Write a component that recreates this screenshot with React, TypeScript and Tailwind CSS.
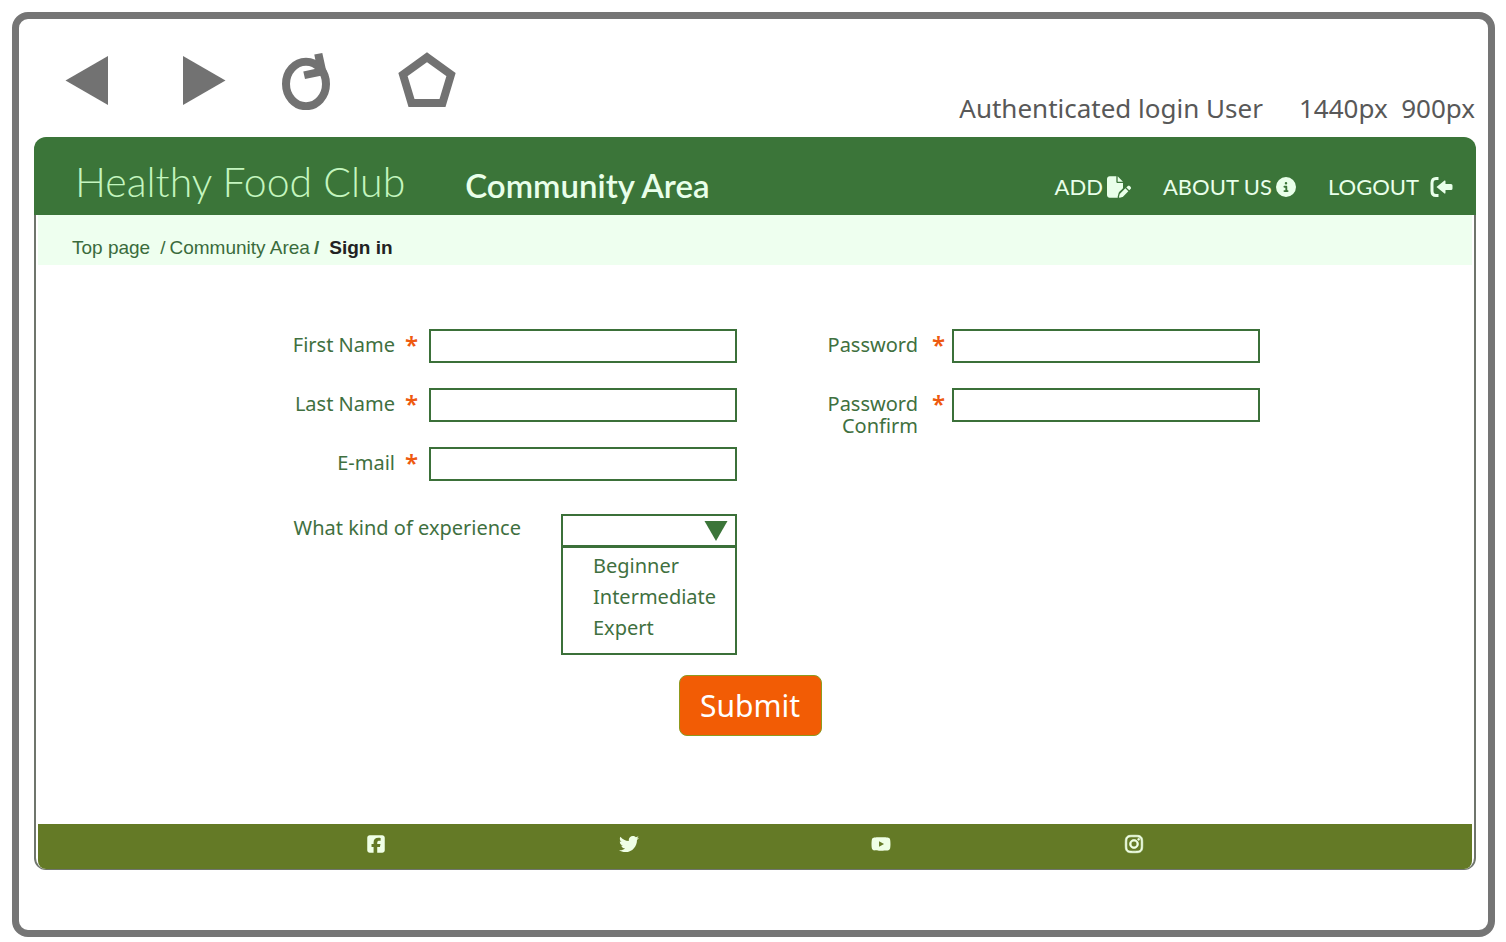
import { useState, type ReactNode } from "react";
import { FaCircleInfo, FaFilePen, FaInstagram, FaSquareFacebook, FaTwitter, FaYoutube } from "react-icons/fa6";

type ToolbarButtonProps = { label: string; className?: string; children: ReactNode };

function ToolbarButton({ label, className = "", children }: ToolbarButtonProps) {
  return (
    <button type="button" aria-label={label} className={`h-[58px] w-[60px] text-[#727272] ${className}`}>
      {children}
    </button>
  );
}

function Toolbar() {
  return (
    <div className="flex min-h-[118px] flex-wrap items-start justify-between pr-[13px] pl-[38px]">
      <div className="flex pt-[33px]">
        <ToolbarButton label="Back">
          <svg viewBox="0 0 60 58" fill="currentColor">
            <path d="M8.500 28.500 51 4v49z" />
          </svg>
        </ToolbarButton>
        <ToolbarButton label="Forward" className="ml-[57px]">
          <svg viewBox="0 0 60 58" fill="currentColor">
            <path d="M51.500 28.500 9 4v49z" />
          </svg>
        </ToolbarButton>
        <ToolbarButton label="Reload" className="ml-[42px]">
          <svg viewBox="0 0 60 58">
            <ellipse cx="30" cy="32" rx="20" ry="22.200" fill="none" stroke="currentColor" strokeWidth="8" />
            <path d="M38.300 2.400 46.300 1 51 22.500 29 27 27.300 19.500 41 16.500z" fill="currentColor" />
          </svg>
        </ToolbarButton>
        <ToolbarButton label="Home" className="ml-[61px]">
          <svg viewBox="0 0 60 58">
            <path d="M30 5.200 54 22.600 45.500 51h-31L6 22.600z" fill="none" stroke="currentColor" strokeWidth="8" />
          </svg>
        </ToolbarButton>
      </div>
      <p className="flex gap-9 pt-[73px] text-[26px] leading-8 whitespace-pre text-[#585858]">
        <span>Authenticated login User</span>
        <span>1440px  900px</span>
      </p>
    </div>
  );
}

function LogoutIcon() {
  return (
    <svg viewBox="0 0 24 22" className="h-[22px] w-6" fill="currentColor">
      <path d="M9.500 2.500H7Q3 2.500 3 7v8q0 4.500 4 4.500h2.500" fill="none" stroke="currentColor" strokeWidth="3" />
      <path d="M7.500 11 15.500 4.500Q16.500 4 16.500 5.500v2.500H22q1.500 0 1.500 1.500v3q0 1.500-1.500 1.500h-5.500v2.500q0 1.500-1 1z" />
    </svg>
  );
}

function Header() {
  return (
    <header className="flex min-h-[78px] flex-wrap items-end rounded-t-xl bg-[#3b7539] pr-[23px] pl-[41px] font-[Lato,sans-serif] text-[#e9ffea]">
      <a href="#home" className="pb-2 text-[41px] leading-[50px] font-light text-[#c4f5bf]">
        Healthy Food Club
      </a>
      <h1 className="pb-[10px] pl-[60px] text-[33px] leading-10 font-semibold">Community Area</h1>
      <nav className="ml-auto flex gap-8 pb-4 text-[22px] leading-6">
        <a href="#add" className="flex items-center gap-1">
          ADD <FaFilePen className="size-6" />
        </a>
        <a href="#about" className="flex items-center gap-1">
          ABOUT US <FaCircleInfo className="size-5" />
        </a>
        <a href="#logout" className="flex items-center gap-[10px]">
          LOGOUT <LogoutIcon />
        </a>
      </nav>
    </header>
  );
}

function Breadcrumb() {
  return (
    <nav
      aria-label="Breadcrumb"
      className="mx-[2px] flex h-[50px] items-center bg-[#eeffef] pt-4 pl-[34px] font-['Liberation_Sans',sans-serif] text-[19px] text-[#3a6b3c]"
    >
      <a href="#top">Top page</a>
      <span className="pr-1 pl-[10px]">/</span>
      <a href="#community">Community Area</a>
      <span className="pr-[10px] pl-1 font-bold">/</span>
      <span aria-current="page" className="font-bold text-[#222222]">
        Sign in
      </span>
    </nav>
  );
}

type FieldProps = { id: string; label: ReactNode; type?: string; spacing: string };

function Field({ id, label, type = "text", spacing }: FieldProps) {
  return (
    <div className="flex h-[34px] items-start justify-end">
      <label htmlFor={id} className="flex pt-[5px] text-right leading-[22px]">
        <span>{label}</span>
        <span className={`w-3 text-center text-[24px] font-semibold text-[#ee5a10] ${spacing}`}>*</span>
      </label>
      <input
        id={id}
        type={type}
        required
        className="h-[34px] w-[308px] min-w-0 border-2 border-[#3b7039] bg-white px-2 outline-none"
      />
    </div>
  );
}

const LEVELS = ["Beginner", "Intermediate", "Expert"];

function ExperienceField() {
  const [level, setLevel] = useState("");
  return (
    <div className="mt-2 flex items-start justify-end gap-10">
      <label htmlFor="experience" className="pt-[3px] leading-[22px]">
        What kind of experience
      </label>
      <div className="w-[176px] border-2 border-[#3b7039]">
        <div className="relative border-b-[3px] border-[#3b7039]">
          <select
            id="experience"
            value={level}
            onChange={(event) => setLevel(event.target.value)}
            className="block h-[29px] w-full appearance-none bg-white px-2 text-base outline-none"
          >
            <option value="" />
            {LEVELS.map((name) => (
              <option key={name}>{name}</option>
            ))}
          </select>
          <svg viewBox="0 0 24 20" className="pointer-events-none absolute top-[5px] right-[7px] h-5 w-6" fill="#3b7539">
            <path d="M.5 0h23L12 20z" />
          </svg>
        </div>
        <ul className="h-[105px] pt-[2px] pl-[30px]">
          {LEVELS.map((name) => (
            <li key={name}>
              <button type="button" onClick={() => setLevel(name)} className="block h-[31px] leading-[31px]">
                {name}
              </button>
            </li>
          ))}
        </ul>
      </div>
    </div>
  );
}

function SignInForm() {
  const left = "ml-[10px] mr-3";
  const right = "ml-[14px] mr-2";
  return (
    <form
      onSubmit={(event) => event.preventDefault()}
      className="mx-auto w-full max-w-[1010px] flex-1 pt-16 pb-6 text-[20px] text-[#3f7040]"
    >
      <div className="grid grid-cols-2 gap-9">
        <div className="flex flex-col gap-[25px]">
          <Field id="first-name" label="First Name" spacing={left} />
          <Field id="last-name" label="Last Name" spacing={left} />
          <Field id="email" label="E-mail" type="email" spacing={left} />
          <ExperienceField />
        </div>
        <div className="flex flex-col gap-[25px]">
          <Field id="password" label="Password" type="password" spacing={right} />
          <Field
            id="password-confirm"
            label={
              <>
                Password
                <br />
                Confirm
              </>
            }
            type="password"
            spacing={right}
          />
        </div>
      </div>
      <div className="mt-5 flex justify-center pr-[10px]">
        <button
          type="submit"
          className="h-[61px] w-[143px] rounded-lg border border-[#8f9a1e] bg-[#f25c05] text-[30px] text-white"
        >
          Submit
        </button>
      </div>
    </form>
  );
}

function Footer() {
  return (
    <footer className="mx-[2px] h-[45px] rounded-b-lg bg-[#647a26] pt-[10px] text-[#efffe6]">
      <div className="mx-auto grid w-full max-w-[1010px] grid-cols-4 justify-items-center">
        <a href="#facebook" aria-label="Facebook">
          <FaSquareFacebook className="size-5" />
        </a>
        <a href="#twitter" aria-label="Twitter">
          <FaTwitter className="size-5" />
        </a>
        <a href="#youtube" aria-label="YouTube">
          <FaYoutube className="size-5" />
        </a>
        <a href="#instagram" aria-label="Instagram">
          <FaInstagram className="size-5" stroke="currentColor" strokeWidth="18" />
        </a>
      </div>
    </footer>
  );
}

export default function App() {
  return (
    <div className="flex min-h-screen flex-col bg-white pt-3 pr-[11px] pb-[5px] pl-3 font-['Noto_Sans',sans-serif]">
      <div className="flex flex-1 flex-col rounded-2xl border-[7px] border-[#757575] pb-[60px]">
        <Toolbar />
        <div className="mr-3 ml-[15px] flex flex-1 flex-col">
          <Header />
          <div className="flex flex-1 flex-col rounded-b-xl border-x-2 border-b border-[#6f756c]">
            <Breadcrumb />
            <SignInForm />
            <Footer />
          </div>
        </div>
      </div>
    </div>
  );
}
